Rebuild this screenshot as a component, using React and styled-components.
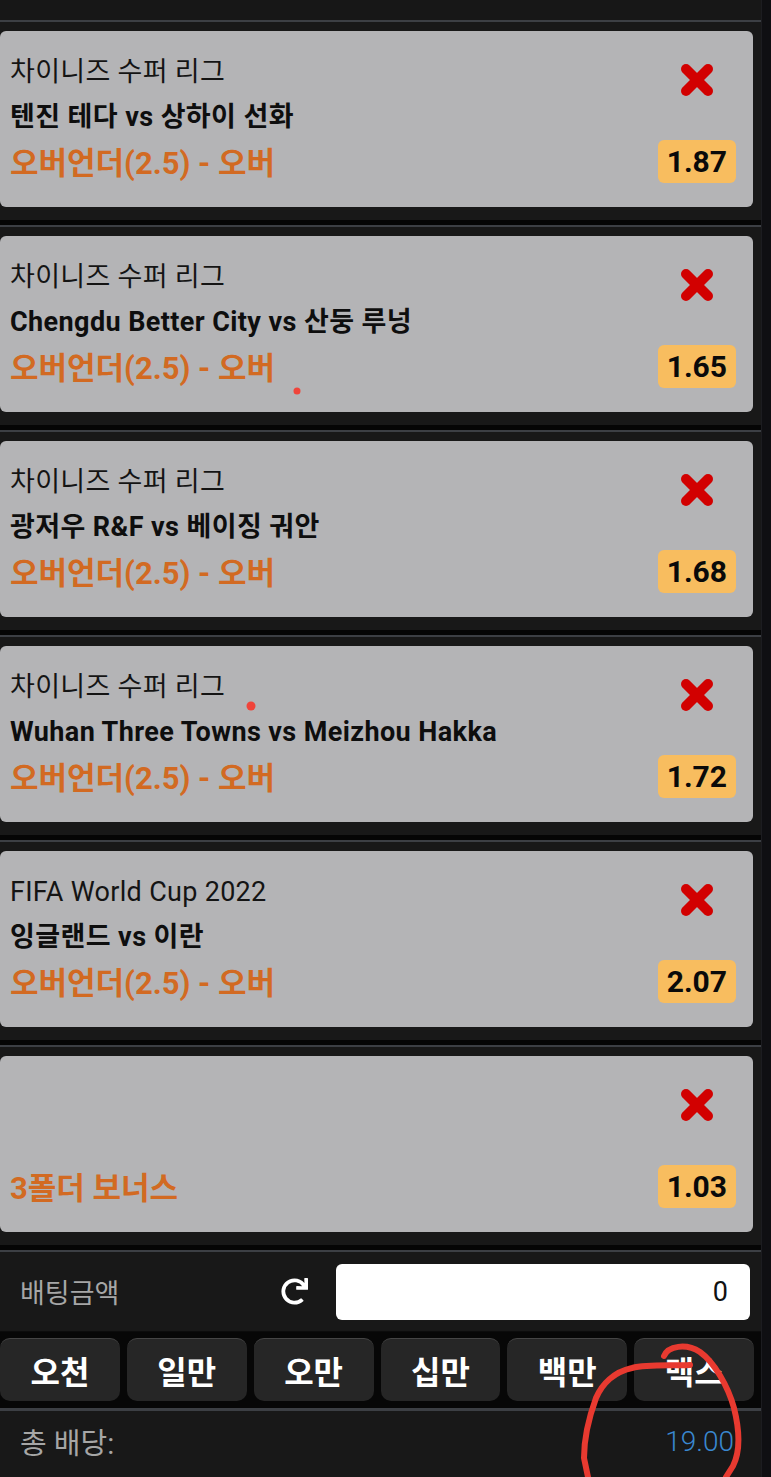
import React from 'react';
import styled, { createGlobalStyle } from 'styled-components';
import { FaRedo } from 'react-icons/fa';

const GlobalStyle = createGlobalStyle`
  html, body {
    margin: 0;
    padding: 0;
    background: #181818;
  }
  body {
    font-family: Roboto, "Noto Sans CJK KR", "Noto Sans", sans-serif;
  }
`;

const slips = [
  { league: '차이니즈 수퍼 리그', match: '텐진 테다 vs 상하이 선화', market: '오버언더(2.5) - 오버', odds: '1.87' },
  { league: '차이니즈 수퍼 리그', match: 'Chengdu Better City vs 산둥 루넝', market: '오버언더(2.5) - 오버', odds: '1.65' },
  { league: '차이니즈 수퍼 리그', match: '광저우 R&F vs 베이징 궈안', market: '오버언더(2.5) - 오버', odds: '1.68' },
  { league: '차이니즈 수퍼 리그', match: 'Wuhan Three Towns vs Meizhou Hakka', market: '오버언더(2.5) - 오버', odds: '1.72' },
  { league: 'FIFA World Cup 2022', match: '잉글랜드 vs 이란', market: '오버언더(2.5) - 오버', odds: '2.07' },
  { league: '', match: '', market: '3폴더 보너스', odds: '1.03' },
];

const amounts = ['오천', '일만', '오만', '십만', '백만', '맥스'];

const Page = styled.div`
  position: relative;
  width: 771px;
  height: 1477px;
  overflow: hidden;
  display: flex;
  background: #181818;
`;

const Main = styled.div`
  width: 762px;
  display: flex;
  flex-direction: column;
`;

const ScrollTrack = styled.div`
  width: 9px;
  background: #0f0f12;
  border-left: 1px solid #1c1c20;
`;

const TopSpacer = styled.div`
  height: 20px;
  background: #171717;
`;

const SlipRow = styled.div`
  border-top: 2px solid #3c3f44;
  border-bottom: 5px solid #050505;
  padding: 9px 8px 13px 0;
  background: #181818;
`;

const Card = styled.div`
  height: 176px;
  background: #b4b4b6;
  border-radius: 6px;
  display: flex;
  justify-content: space-between;
`;

const Info = styled.div`
  padding: 23px 0 0 10px;
  display: flex;
  flex-direction: column;
`;

const League = styled.div`
  height: 36px;
  line-height: 36px;
  font-size: 27px;
  letter-spacing: 0.3px;
  color: #141414;
  white-space: nowrap;
`;

const Match = styled.div`
  height: 36px;
  line-height: 36px;
  margin-top: 9px;
  font-size: 27px;
  font-weight: 700;
  letter-spacing: 0.4px;
  color: #0e0e0e;
  white-space: nowrap;
`;

const Market = styled.div`
  height: 40px;
  line-height: 40px;
  margin-top: 9px;
  font-size: 31px;
  font-weight: 700;
  color: #d26a22;
  white-space: nowrap;
`;

const Side = styled.div`
  padding: 31px 17px 0 0;
  display: flex;
  flex-direction: column;
  align-items: center;
`;

const RemoveIcon = styled.svg`
  width: 36px;
  height: 36px;
  margin-bottom: 42px;
`;

const Odds = styled.div`
  height: 43px;
  line-height: 43px;
  padding: 0 9px;
  border-radius: 6px;
  background: #f8bd5f;
  font-size: 30px;
  font-weight: 700;
  color: #0a0a0a;
`;

const BetRow = styled.div`
  height: 79px;
  border-top: 2px solid #3c3f44;
  background: #181818;
  display: flex;
  align-items: center;
  padding: 0 11px 0 20px;
`;

const BetLabel = styled.div`
  font-size: 27px;
  color: #a6a6a6;
  width: 261px;
`;

const Refresh = styled.div`
  width: 55px;
  display: flex;
  align-items: center;
  color: #fff;
  font-size: 27px;
`;

const AmountBox = styled.div`
  flex: 1;
  height: 56px;
  border-radius: 6px;
  background: #fff;
  display: flex;
  align-items: center;
  justify-content: flex-end;
  padding-right: 22px;
  font-size: 27px;
  color: #111;
`;

const QuickRow = styled.div`
  display: flex;
  gap: 7px;
  padding: 6px 7px 7px 0;
  background: #070707;
  border-top: 1px solid #0c0c0c;
  border-bottom: 3px solid #3c3f44;
`;

const QuickButton = styled.button`
  flex: 1;
  height: 63px;
  border: none;
  border-top: 1px solid #454545;
  border-radius: 10px;
  background: #262626;
  color: #fff;
  font-family: inherit;
  font-size: 32px;
  font-weight: 700;
  padding: 0;
`;

const TotalRow = styled.div`
  flex: 1;
  display: flex;
  align-items: center;
  justify-content: space-between;
  padding: 0 27px 6px 20px;
  background: #181818;
  font-size: 28px;
`;

const TotalLabel = styled.span`
  color: #a6a6a6;
  font-size: 29px;
`;

const TotalValue = styled.span`
  color: #3a88d0;
  font-weight: 300;
`;

const Marks = styled.svg`
  position: absolute;
  left: 0;
  top: 0;
  pointer-events: none;
`;

const XMark = () => (
  <RemoveIcon viewBox="0 0 36 36">
    <g stroke="#d20000" strokeWidth="10" strokeLinecap="round">
      <line x1="7" y1="7" x2="29" y2="29" />
      <line x1="29" y1="7" x2="7" y2="29" />
    </g>
  </RemoveIcon>
);

const Slip = ({ league, match, market, odds }) => (
  <SlipRow>
    <Card>
      <Info>
        <League>{league}</League>
        <Match>{match}</Match>
        <Market>{market}</Market>
      </Info>
      <Side>
        <XMark />
        <Odds>{odds}</Odds>
      </Side>
    </Card>
  </SlipRow>
);

const App = () => (
  <Page>
    <GlobalStyle />
    <Main>
      <TopSpacer />
      {slips.map((s, i) => (
        <Slip key={i} {...s} />
      ))}
      <BetRow>
        <BetLabel>배팅금액</BetLabel>
        <Refresh>
          <FaRedo />
        </Refresh>
        <AmountBox>0</AmountBox>
      </BetRow>
      <QuickRow>
        {amounts.map((a) => (
          <QuickButton key={a}>{a}</QuickButton>
        ))}
      </QuickRow>
      <TotalRow>
        <TotalLabel>총 배당:</TotalLabel>
        <TotalValue>19.00</TotalValue>
      </TotalRow>
    </Main>
    <ScrollTrack />
    <Marks width="771" height="1477" viewBox="0 0 771 1477">
      <circle cx="297" cy="391" r="3.5" fill="#f0443a" />
      <circle cx="251" cy="706" r="4.5" fill="#f0443a" />
      <g fill="none" stroke="#e83a30" strokeWidth="6" strokeLinecap="round" strokeLinejoin="round">
        <path d="M664 1356 C668 1346 686 1343 700 1352 C714 1362 728 1386 734 1408 C740 1432 740 1452 733 1466 L726 1477" />
        <path d="M690 1365 C668 1366 648 1364 632 1368 C614 1372 602 1384 596 1398 C588 1420 584 1440 584 1458 L588 1477" />
      </g>
    </Marks>
  </Page>
);

export default App;
